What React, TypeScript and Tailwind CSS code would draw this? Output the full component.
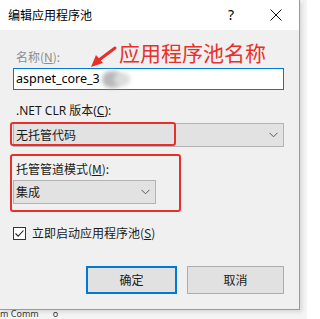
import React from "react";

const font = { fontFamily: '"Noto Sans", "Noto Sans CJK SC", sans-serif' };

function Chevron() {
  return (
    <svg width="9" height="6" viewBox="0 0 9 6" className="shrink-0">
      <path d="M0.5 0.8 L4.5 4.8 L8.5 0.8" fill="none" stroke="#5a5a5a" strokeWidth="1" />
    </svg>
  );
}

export default function App() {
  return (
    <div
      className="relative w-[307px] h-[319px] overflow-hidden bg-[#f4f4f4] text-[12px] text-[#1a1a1a]"
      style={{ fontFamily: '"Noto Sans", "Noto Sans CJK SC", sans-serif' }}
    >
      {/* Dialog */}
      <div className="w-[300px] h-[310px] bg-[#f0f0f0] border-r border-b border-[#9a9a9a] shadow-[2px_2px_4px_rgba(0,0,0,0.12)] flex flex-col">
        {/* Title bar */}
        <div className="h-[30px] bg-white flex items-center shrink-0">
          <span className="pl-[8px] text-[12px] leading-[16px] text-black" style={{ fontFamily: '"Noto Sans CJK SC", sans-serif' }}>
            编辑应用程序池
          </span>
          <span className="ml-auto mr-[36px] text-[14px] leading-none text-black">?</span>
          <svg width="12" height="12" viewBox="0 0 12 12" className="mr-[17px]">
            <path d="M0.5 0.5 L11.5 11.5 M11.5 0.5 L0.5 11.5" stroke="#111" strokeWidth="1" />
          </svg>
        </div>

        {/* Body */}
        <div className="flex flex-col pl-[13px] pt-[19px]">
          <div className="pl-[3px] h-[16px] leading-[16px] text-[#8d8d8d]" style={{ fontFamily: '"Noto Sans CJK SC", sans-serif' }}>
            名称(<span className="underline">N</span>):
          </div>
          <div className="mt-[3px] w-[271px] h-[22px] bg-white border border-[#0078d7] flex items-center pl-[2px] text-[12.5px] text-black">
            <span style={font}>aspnet_core_3</span>
            <span className="ml-[2px] relative w-[28px] h-[18px]">
              <span className="absolute left-0 top-[1px] w-[20px] h-[17px] rounded-full bg-[#b9b9b9] blur-[2px]" />
              <span className="absolute left-[12px] top-[3px] w-[16px] h-[13px] rounded-full bg-[#dcdcdc] blur-[2px]" />
            </span>
          </div>

          <div className="mt-[13px] pl-[3px] h-[16px] leading-[16px]" style={font}>
            .NET CLR 版本(<span className="underline">C</span>):
          </div>
          <div className="mt-[4px] w-[271px] h-[24px] bg-[#e2e2e2] border border-[#b3b3b3] flex items-center pl-[2px] pr-[5px]">
            <span style={{ fontFamily: '"Noto Sans CJK SC", sans-serif' }}>无托管代码</span>
            <span className="ml-auto"><Chevron /></span>
          </div>

          <div className="mt-[14px] pl-[3px] h-[16px] leading-[16px]" style={{ fontFamily: '"Noto Sans CJK SC", sans-serif' }}>
            托管管道模式(<span className="underline">M</span>):
          </div>
          <div className="mt-[3px] w-[143px] h-[24px] bg-[#e2e2e2] border border-[#b3b3b3] flex items-center pl-[2px] pr-[5px]">
            <span style={{ fontFamily: '"Noto Sans CJK SC", sans-serif' }}>集成</span>
            <span className="ml-auto"><Chevron /></span>
          </div>

          <div className="mt-[21px] flex items-center h-[16px]">
            <span className="w-[13px] h-[13px] border border-[#333] bg-white flex items-center justify-center">
              <svg width="11" height="11" viewBox="0 0 11 11">
                <path d="M1.5 5.5 L4.2 8.2 L9.5 2.5" fill="none" stroke="#222" strokeWidth="1.1" />
              </svg>
            </span>
            <span className="ml-[6px]" style={{ fontFamily: '"Noto Sans CJK SC", sans-serif' }}>
              立即启动应用程序池(<span className="underline">S</span>)
            </span>
          </div>

          <div className="mt-[25px] flex pl-[73px] gap-[10px]">
            <div className="w-[91px] h-[28px] bg-[#e1e1e1] border-2 border-[#0078d7] flex items-center justify-center" style={{ fontFamily: '"Noto Sans CJK SC", sans-serif' }}>
              确定
            </div>
            <div className="w-[97px] h-[28px] bg-[#e1e1e1] border border-[#adadad] flex items-center justify-center" style={{ fontFamily: '"Noto Sans CJK SC", sans-serif' }}>
              取消
            </div>
          </div>
        </div>
      </div>

      {/* Background text below the dialog */}
      <div className="absolute left-[0px] top-[309px] text-[9px] leading-[9px] text-[#333] whitespace-nowrap">
        m Comm<span className="ml-[14px]">o</span>
      </div>

      {/* Annotations */}
      <div className="absolute left-[10px] top-[122px] w-[166px] h-[24px] border-2 border-[#e8302a] rounded-[3px]" />
      <div className="absolute left-[10px] top-[154px] w-[171px] h-[58px] border-2 border-[#e8302a] rounded-[3px]" />
      <svg className="absolute left-[88px] top-[44px]" width="30" height="26" viewBox="0 0 30 26">
        <path d="M27 4 L11 16" stroke="#e8302a" strokeWidth="3" strokeLinecap="round" />
        <path d="M3 23 L8 11 L15 19 Z" fill="#e8302a" />
      </svg>
      <div
        className="absolute left-[119px] top-[38px] text-[21px] leading-[28px] text-[#e8302a] whitespace-nowrap"
        style={{ fontFamily: '"Noto Sans CJK SC", sans-serif' }}
      >
        应用程序池名称
      </div>
    </div>
  );
}
